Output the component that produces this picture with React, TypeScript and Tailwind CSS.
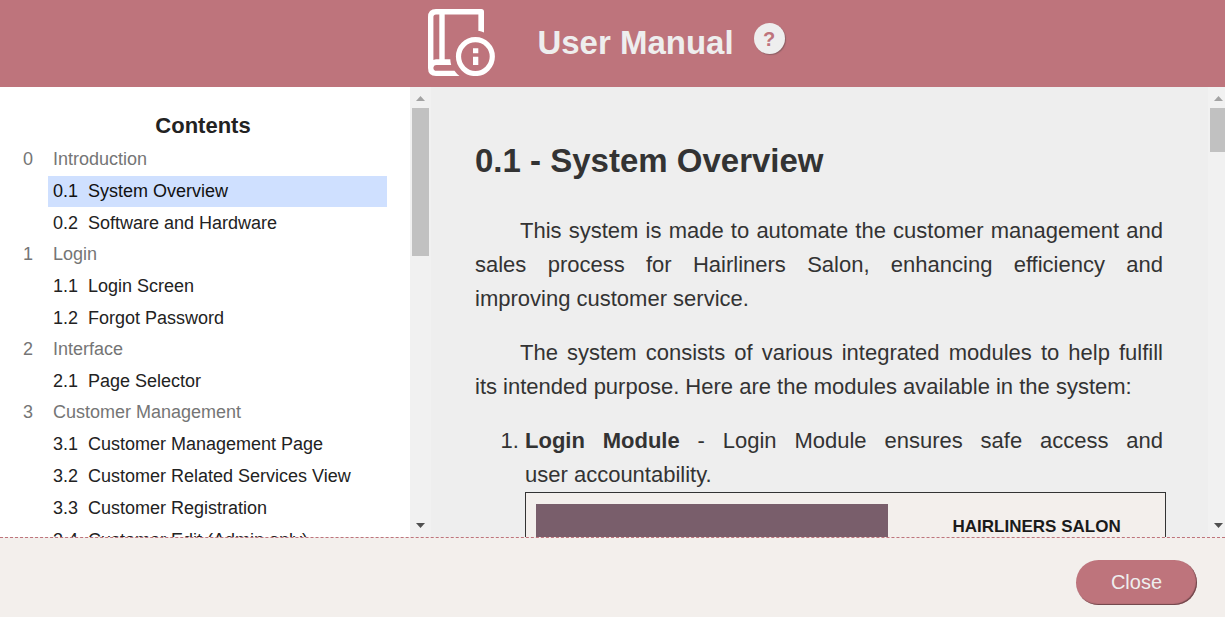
const sections = [
  { no: '0', title: 'Introduction', items: [['0.1', 'System Overview'], ['0.2', 'Software and Hardware']] },
  { no: '1', title: 'Login', items: [['1.1', 'Login Screen'], ['1.2', 'Forgot Password']] },
  { no: '2', title: 'Interface', items: [['2.1', 'Page Selector']] },
  {
    no: '3',
    title: 'Customer Management',
    items: [
      ['3.1', 'Customer Management Page'],
      ['3.2', 'Customer Related Services View'],
      ['3.3', 'Customer Registration'],
      ['3.4', 'Customer Edit (Admin only)'],
    ],
  },
];

const current = '0.1';

function ManualIcon() {
  return (
    <svg viewBox="0 0 67 67" className="size-[67px]" fill="none" stroke="#fff" aria-hidden="true">
      <path d="M53.3 22V2.7H8Q2.7 2.7 2.7 8v50" strokeWidth="5.4" strokeLinejoin="round" />
      <path d="M50.6 21.8V2.7H56v20.9Q53.5 22.2 50.6 21.8Z" fill="#fff" stroke="none" />
      <path d="M14 3v49" strokeWidth="5.4" />
      <path d="M8 50.3H22.3Q22.4 53.5 23.2 56H8.5Q5.4 56 5.4 58.9Q5.4 61.7 8.5 61.7H26.5Q28.5 64.7 31.5 67H8Q0 67 0 59V54Q4 50.3 8 50.3Z" fill="#fff" stroke="none" />
      <circle cx="47.4" cy="47.6" r="16.9" strokeWidth="5.2" />
      <path d="M45 39.3h5.3v5H45zM45 47.7h5.3v8.3H45z" fill="#fff" stroke="none" />
    </svg>
  );
}

function Scrollbar({ side }: { side: 'contents' | 'page' }) {
  const contents = side === 'contents';
  return (
    <div
      aria-hidden="true"
      className={`flex shrink-0 flex-col bg-[#f1f1f1] pt-[9px] pb-[9px] pl-[2px] ${contents ? 'w-[21px] pr-[2px]' : 'w-[17px]'}`}
    >
      <svg viewBox="0 0 9 5" className="ml-1 h-[5px] w-[9px]" fill="#a3a3a3">
        <path d="M0 5 4.5 0 9 5Z" />
      </svg>
      <div className={`mt-[7px] bg-[#c1c1c1] ${contents ? 'h-[148px]' : 'h-[44px]'}`} />
      <svg viewBox="0 0 9 5" className="mt-auto ml-1 h-[5px] w-[9px]" fill="#505050">
        <path d="M0 0 4.5 5 9 0Z" />
      </svg>
    </div>
  );
}

export default function App() {
  return (
    <div className="flex h-screen flex-col overflow-hidden bg-[#f3efec] font-['Liberation_Sans',Arial,sans-serif]">
      <header className="flex h-[87px] shrink-0 items-center justify-center bg-[#be747c] pr-3 pb-[2px]">
        <ManualIcon />
        <h1 className="ml-[42px] text-[33px] font-bold text-[#eee]">User Manual</h1>
        <button
          aria-label="Help"
          className="mb-2 ml-5 flex size-[31px] items-center justify-center rounded-full bg-[#eee] text-[20px] font-bold text-[#be747c] shadow-[1px_1px_1px_#8f5f65]"
        >
          ?
        </button>
      </header>

      <div className="flex min-h-0 flex-1">
        <nav aria-label="Contents" className="flex w-[431px] shrink-0 bg-white">
          <div className="min-w-0 flex-1 overflow-hidden px-[23px] pt-[21px]">
            <h2 className="pr-1 text-center text-[22px] leading-9 font-bold text-[#222]">Contents</h2>
            <ul className="text-[18px] leading-[31px]">
              {sections.map((s) => (
                <li key={s.no}>
                  <div className="flex text-[#757575]">
                    <span className="w-[30px]">{s.no}</span>
                    <span>{s.title}</span>
                  </div>
                  <ul className="pl-[25px]">
                    {s.items.map(([no, title]) => (
                      <li key={no} className="mt-px">
                        <a href={`#${no}`} className={`flex pl-[5px] ${no === current ? 'bg-[#cfe0ff] text-[#111]' : 'text-[#222]'}`}>
                          <span className="w-[35px]">{no}</span>
                          <span>{title}</span>
                        </a>
                      </li>
                    ))}
                  </ul>
                </li>
              ))}
            </ul>
          </div>
          <Scrollbar side="contents" />
        </nav>

        <main className="min-w-0 flex-1 overflow-hidden bg-[#eee] pt-[54px] pr-[45px] pl-[44px] text-[22px] leading-[34px] text-[#333]">
          <h2 className="text-[33px] leading-10 font-bold">0.1 - System Overview</h2>
          <p className="mt-[33px] indent-[45px] text-justify">
            This system is made to automate the customer management and sales process for Hairliners Salon, enhancing efficiency and
            improving&nbsp;customer service.
          </p>
          <p className="mt-5 indent-[45px] text-justify">
            The system consists of various integrated modules to help fulfill its intended purpose. Here are the modules available in
            the system:
          </p>
          <ol className="mt-5 list-decimal pl-[50px]">
            <li>
              <p className="text-justify">
                <b>Login Module</b> - Login Module ensures safe access and user&nbsp;accountability.
              </p>
              <div className="mr-[-3px] flex border border-[#333] bg-[#f3efec] pt-[11px] pl-[10px]">
                <div className="h-[300px] w-[56%] bg-[#795e6b]" />
                <div className="flex-1 pt-[6px] pl-5 text-center text-[17px] font-bold text-[#1a1a1a]">HAIRLINERS SALON</div>
              </div>
            </li>
          </ol>
        </main>
        <Scrollbar side="page" />
      </div>

      <footer className="flex h-[80px] shrink-0 items-start justify-end border-t border-dashed border-[#be747c] pt-[22px] pr-7">
        <button className="h-[45px] w-[121px] rounded-full bg-[#be747c] pb-[2px] text-[20px] text-[#eee] shadow-[inset_-1px_-1px_1px_#6d454a]">
          Close
        </button>
      </footer>
    </div>
  );
}
